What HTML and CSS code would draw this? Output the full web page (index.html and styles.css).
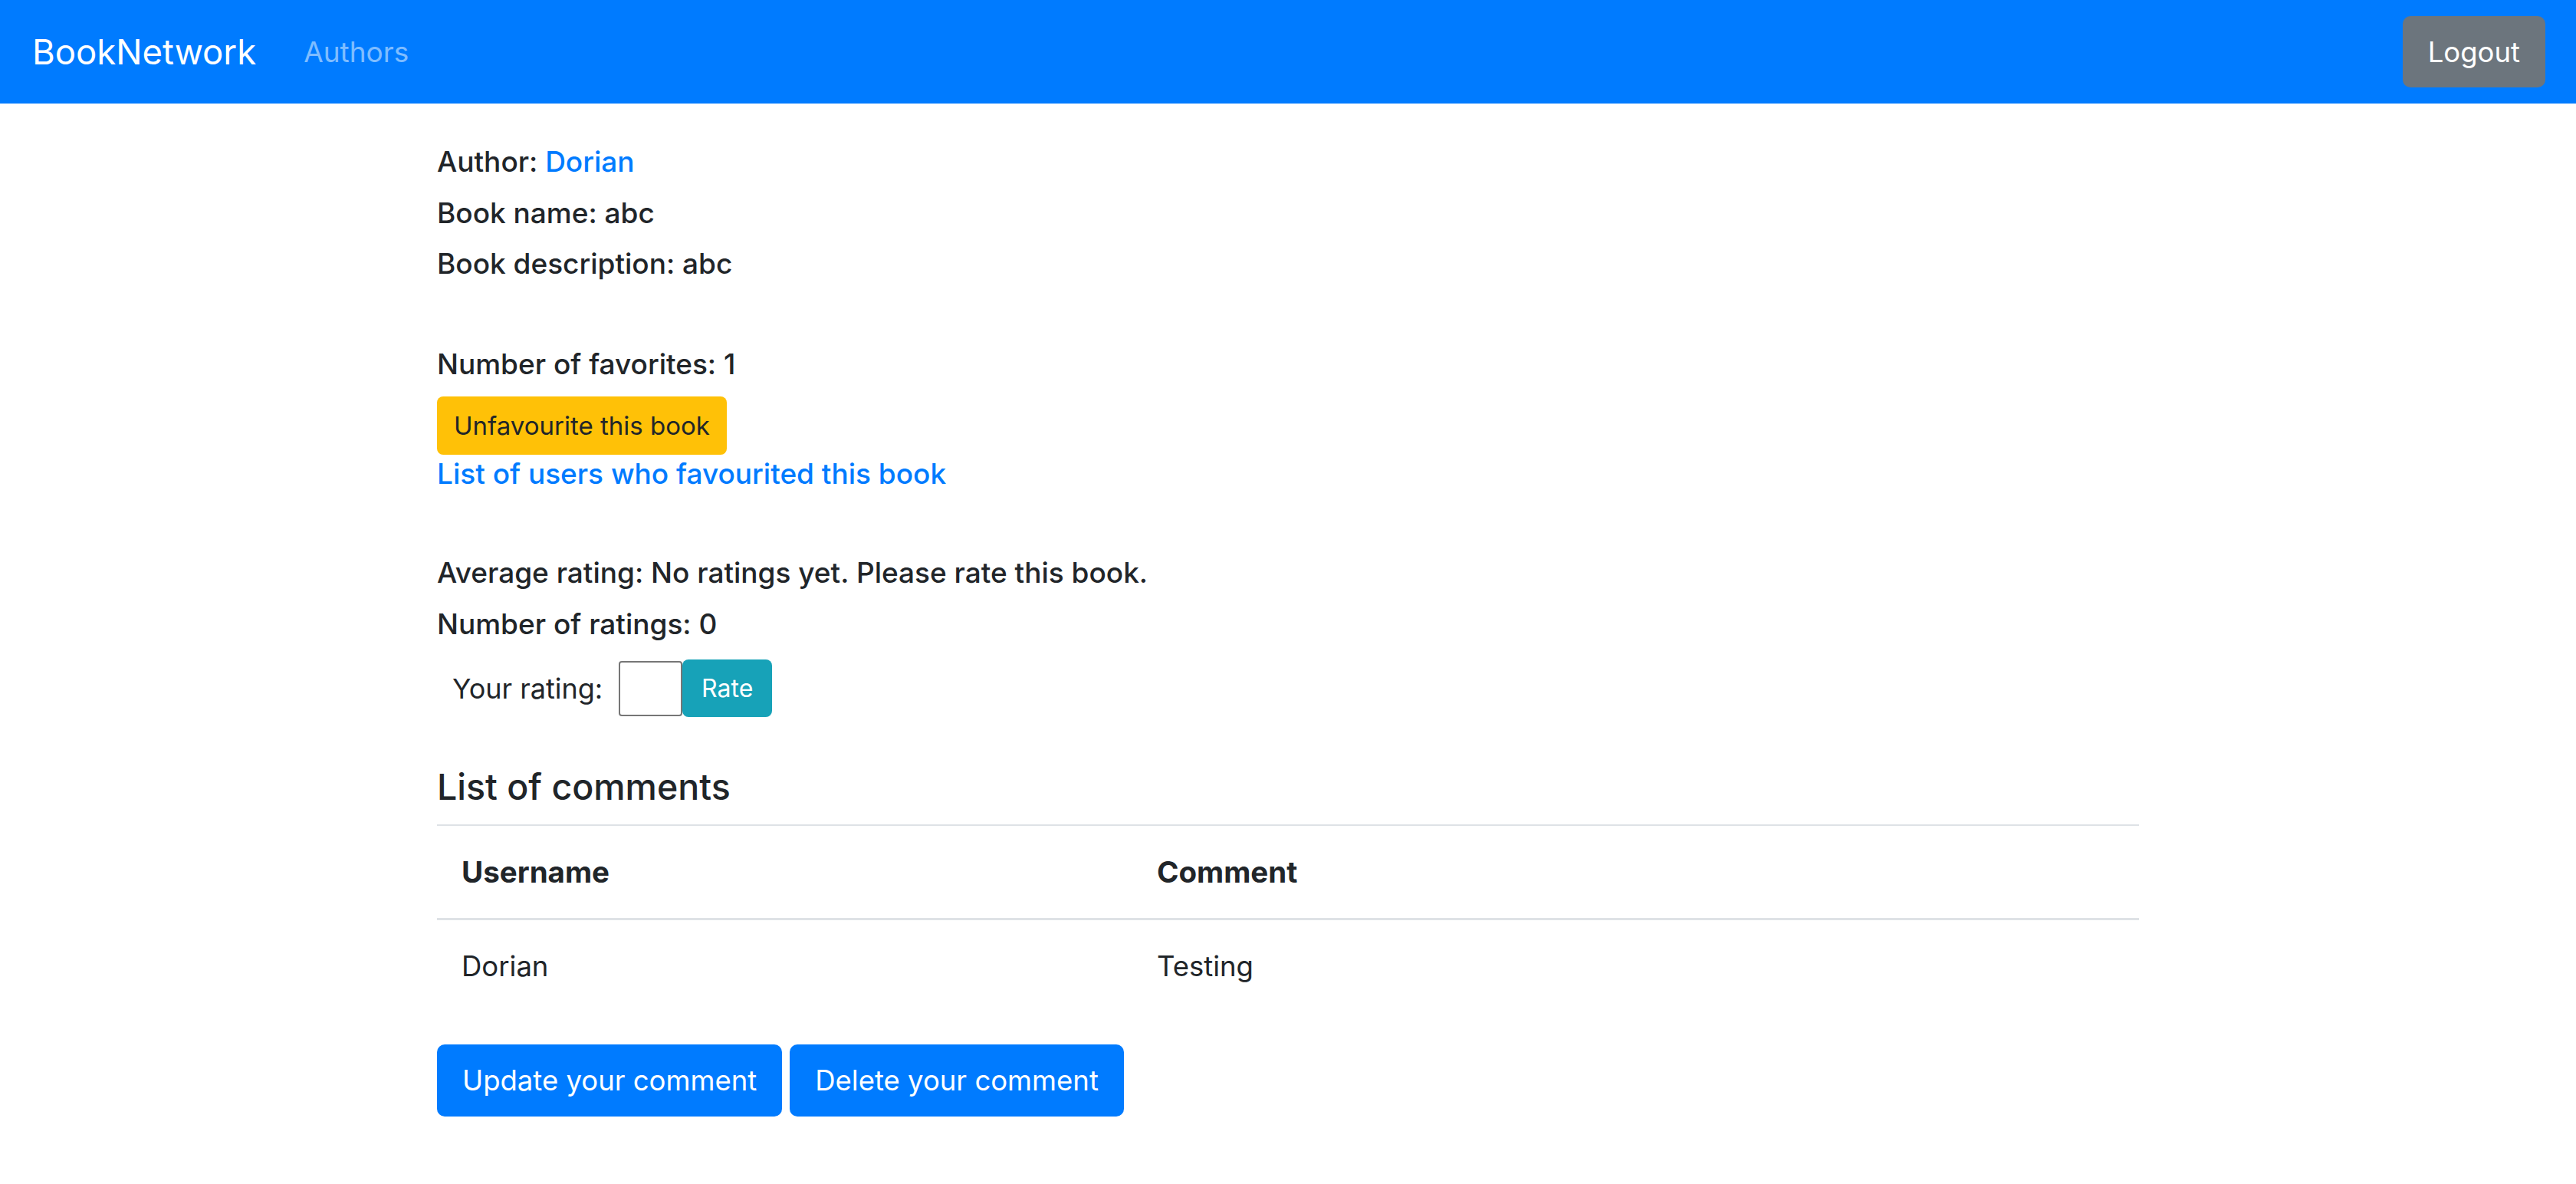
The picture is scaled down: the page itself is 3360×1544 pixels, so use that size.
FILE: index.html
```html
<!DOCTYPE html>
<html lang="en">
<head>
<meta charset="utf-8">
<title>BookNetwork</title>
<link rel="stylesheet" href="styles.css">
</head>
<body>
<nav class="navbar">
  <a class="brand" href="#">BookNetwork</a>
  <a class="nav-link" href="#">Authors</a>
  <div class="spacer"></div>
  <button class="btn btn-secondary">Logout</button>
</nav>
<main class="container">
  <div class="line">Author: <a class="link" href="#">Dorian</a></div>
  <div class="line">Book name: abc</div>
  <div class="line">Book description: abc</div>
  <div class="line blank"></div>
  <div class="line">Number of favorites: 1</div>
  <button class="btn btn-warning">Unfavourite this book</button>
  <a class="link link-block" href="#">List of users who favourited this book</a>
  <div class="line blank"></div>
  <div class="line">Average rating: No ratings yet. Please rate this book.</div>
  <div class="line">Number of ratings: 0</div>
  <form class="rate-row">
    <label class="rate-label">Your rating:</label>
    <input class="rate-input" type="text">
    <button class="btn btn-info" type="button">Rate</button>
  </form>
  <h3 class="heading">List of comments</h3>
  <table class="table">
    <thead>
      <tr><th class="col-user">Username</th><th>Comment</th></tr>
    </thead>
    <tbody>
      <tr><td>Dorian</td><td>Testing</td></tr>
    </tbody>
  </table>
  <div class="actions">
    <button class="btn btn-primary">Update your comment</button>
    <button class="btn btn-primary">Delete your comment</button>
  </div>
</main>
</body>
</html>
```
FILE: styles.css
```css
* { box-sizing: border-box; }
html, body { margin: 0; padding: 0; }
body {
  font-family: Inter, "Noto Sans", sans-serif;
  color: #212529;
  background: #fff;
}
.navbar {
  height: 135px;
  background: #007bff;
  display: flex;
  align-items: center;
  padding: 0 40px 0 42px;
}
.brand {
  color: #fff;
  text-decoration: none;
  font-size: 45.5px;
  margin-right: 62px;
}
.nav-link {
  color: rgba(255,255,255,.5);
  text-decoration: none;
  font-size: 37px;
}
.spacer { flex: 1; }
.btn {
  font-family: inherit;
  border: none;
  cursor: pointer;
  color: #fff;
  border-radius: 10px;
}
.btn-secondary {
  background: #6c757d;
  font-size: 36.5px;
  height: 93px;
  padding: 0 33px;
}
.container {
  width: 2220px;
  margin: 0 auto;
  padding-top: 43px;
}
.line {
  font-size: 37px;
  font-weight: 500;
  line-height: 66.5px;
  height: 66.5px;
}
.line.blank { height: 64px; }
.link { color: #007bff; text-decoration: none; }
.btn-warning {
  display: block;
  background: #ffc107;
  color: #212529;
  font-size: 33px;
  height: 76px;
  padding: 0 22px;
  border-radius: 8px;
  margin-top: 9px;
}
.link-block {
  display: block;
  font-size: 37px;
  font-weight: 500;
  line-height: 50px;
  width: max-content;
  margin-bottom: 7px;
}
.rate-row {
  display: flex;
  align-items: center;
  height: 75px;
  margin-top: 13px;
  padding-left: 20px;
}
.rate-label {
  font-size: 36px;
  margin-right: 21px;
}
.rate-input {
  width: 83px;
  height: 72px;
  border: 2px solid #767676;
  border-radius: 4px;
  padding: 0;
}
.btn-info {
  background: #17a2b8;
  font-size: 32px;
  height: 75px;
  width: 117px;
  border-radius: 8px;
  padding: 0;
}
.heading {
  font-size: 46.5px;
  font-weight: 500;
  margin: 0;
  line-height: 54px;
  margin-top: 64px;
  height: 76px;
}
.table {
  width: 100%;
  border-collapse: collapse;
  font-size: 36.5px;
  margin-bottom: 42px;
}
.table th, .table td {
  text-align: left;
  padding: 30px 32px;
  line-height: 60px;
  border-top: 2px solid #dee2e6;
  vertical-align: top;
}
.table th { font-weight: 700; font-size: 38.5px; border-bottom: 3px solid #dee2e6; }
.col-user { width: 907px; }
.actions { display: flex; gap: 10px; }
.btn-primary {
  background: #007bff;
  font-size: 36.5px;
  height: 94px;
  padding: 0 33px;
}
```
